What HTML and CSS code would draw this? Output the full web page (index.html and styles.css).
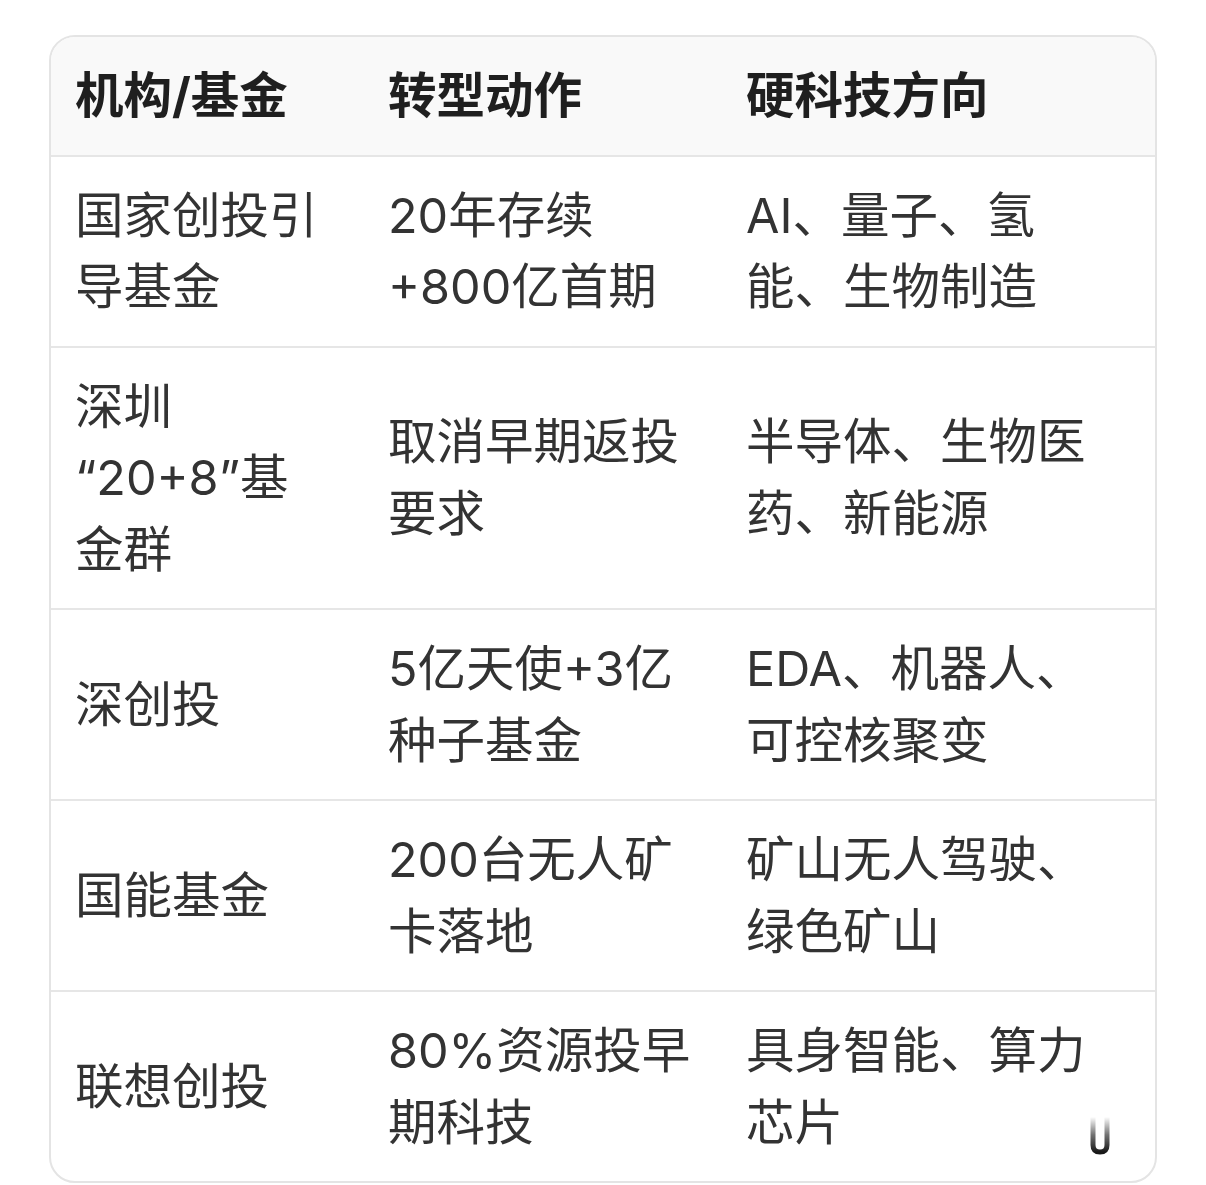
FILE: index.html
```html
<!DOCTYPE html>
<html lang="zh-CN">
<head>
<meta charset="utf-8">
<title>硬科技转型</title>
<link rel="stylesheet" href="styles.css">
</head>
<body>
<div class="page">
  <div class="card">
    <table class="grid">
      <colgroup>
        <col class="c1">
        <col class="c2">
        <col class="c3">
      </colgroup>
      <thead>
        <tr>
          <th>机构/基金</th>
          <th>转型动作</th>
          <th>硬科技方向</th>
        </tr>
      </thead>
      <tbody>
        <tr>
          <td>国家创投引<br>导基金</td>
          <td>20年存续<br>+800亿首期</td>
          <td>AI、量子、氢<br>能、生物制造</td>
        </tr>
        <tr>
          <td>深圳<br>“20+8”基<br>金群</td>
          <td>取消早期返投<br>要求</td>
          <td>半导体、生物医<br>药、新能源</td>
        </tr>
        <tr>
          <td>深创投</td>
          <td>5亿天使+3亿<br>种子基金</td>
          <td>EDA、机器人、<br>可控核聚变</td>
        </tr>
        <tr>
          <td>国能基金</td>
          <td>200台无人矿<br>卡落地</td>
          <td>矿山无人驾驶、<br>绿色矿山</td>
        </tr>
        <tr>
          <td>联想创投</td>
          <td>80%资源投早<br>期科技</td>
          <td>具身智能、算力<br>芯片</td>
        </tr>
      </tbody>
    </table>
    <div class="mark" aria-hidden="true">
      <svg width="22" height="40" viewBox="0 0 22 40">
        <defs>
          <linearGradient id="ug" x1="0" y1="0" x2="0" y2="1">
            <stop offset="0" stop-color="#000" stop-opacity="0"/>
            <stop offset="0.5" stop-color="#000" stop-opacity="0.6"/>
            <stop offset="1" stop-color="#000" stop-opacity="1"/>
          </linearGradient>
        </defs>
        <path d="M4 2 V30 Q4 37 11 37 Q18 37 18 30 V2" fill="none" stroke="url(#ug)" stroke-width="5"/>
      </svg>
    </div>
  </div>
</div>
</body>
</html>
```

FILE: styles.css
```css
html, body {
  margin: 0;
  padding: 0;
  background: #ffffff;
}

body {
  font-family: Inter, "Noto Sans CJK SC", sans-serif;
  color: #333333;
}

.page {
  padding: 35px 49px 0 49px;
}

.card {
  position: relative;
  width: 1108px;
  box-sizing: border-box;
  border: 2px solid #e4e4e4;
  border-radius: 26px;
  overflow: hidden;
  background: #ffffff;
}

.grid {
  width: 100%;
  border-collapse: collapse;
  table-layout: fixed;
}

.c1 { width: 311px; }
.c2 { width: 358px; }
.c3 { width: auto; }

.grid th,
.grid td {
  padding: 23px 10px 23px 24px;
  font-size: 48.5px;
  line-height: 71.5px;
  text-align: left;
  vertical-align: middle;
  white-space: nowrap;
}

.grid th:nth-child(2),
.grid td:nth-child(2),
.grid th:nth-child(3),
.grid td:nth-child(3) {
  padding-left: 26px;
}

.grid thead th {
  background: #f9f9f9;
  color: #1f1f1f;
  font-weight: 700;
  border-bottom: 2px solid #e6e6e6;
}

.grid tbody td {
  font-weight: 400;
  color: #333333;
}

.grid tbody tr + tr td {
  border-top: 2px solid #e6e6e6;
}

.mark {
  position: absolute;
  right: 44px;
  bottom: 22px;
  opacity: 0.9;
}
```
